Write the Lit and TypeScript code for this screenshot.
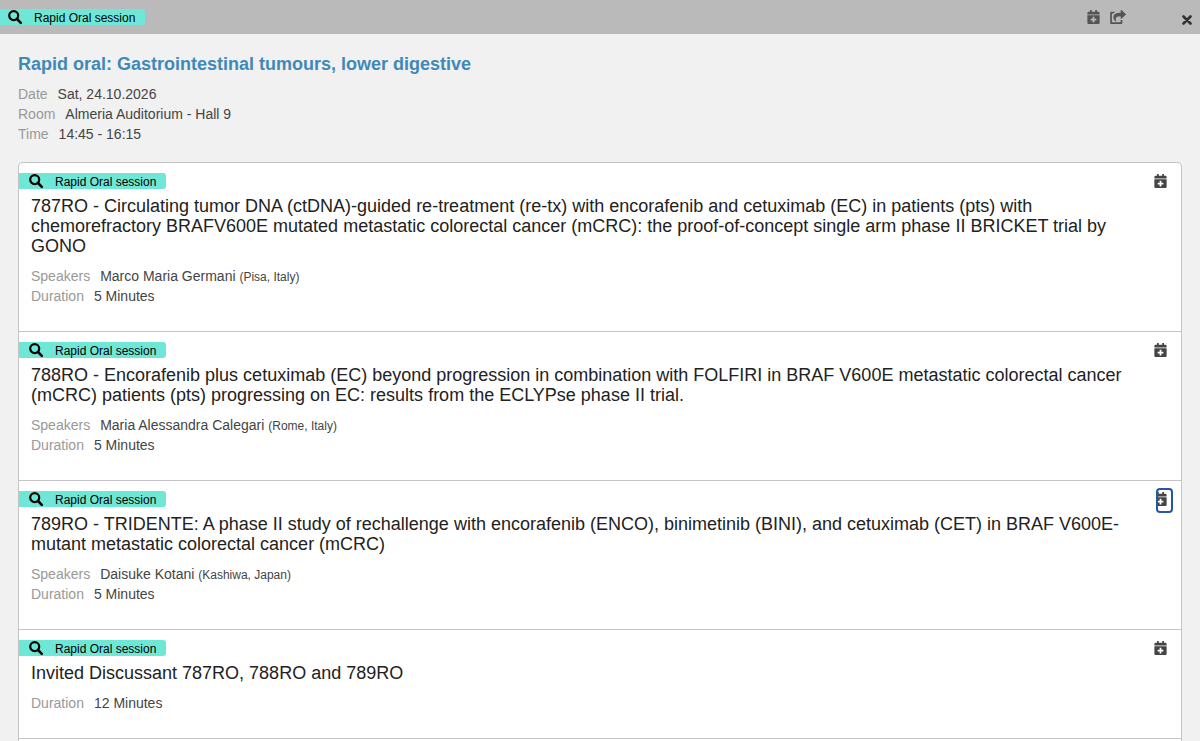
import { LitElement, html, css, svg, nothing } from "lit";
import { customElement, property } from "lit/decorators.js";

const calendarPlus = svg`<path d="M436 160H12c-6.6 0-12-5.4-12-12v-36c0-26.5 21.5-48 48-48h48V12c0-6.6 5.4-12 12-12h40c6.6 0 12 5.4 12 12v52h128V12c0-6.6 5.4-12 12-12h40c6.6 0 12 5.4 12 12v52h48c26.5 0 48 21.5 48 48v36c0 6.6-5.4 12-12 12zM12 192h424c6.6 0 12 5.4 12 12v260c0 26.5-21.5 48-48 48H48c-26.5 0-48-21.5-48-48V204c0-6.6 5.4-12 12-12zm316 140c0-6.6-5.4-12-12-12h-60v-60c0-6.6-5.4-12-12-12h-40c-6.6 0-12 5.4-12 12v60h-60c-6.6 0-12 5.4-12 12v40c0 6.6 5.4 12 12 12h60v60c0 6.6 5.4 12 12 12h40c6.6 0 12-5.4 12-12v-60h60c6.6 0 12-5.4 12-12v-40z"/>`;

const shareSquare = svg`<path d="M568.482 177.448L424.479 313.433C409.3 327.768 384 317.14 384 295.985v-71.963c-144.575.97-205.566 35.113-164.775 171.353 4.483 14.973-12.846 26.567-25.006 17.33C155.252 383.105 120 326.488 120 269.339c0-143.937 117.599-172.5 264-173.312V24.012c0-21.174 25.317-31.768 40.479-17.448l144.003 135.988c10.02 9.463 10.028 25.425 0 34.896zM384 379.128V448H64V128h50.916a11.99 11.99 0 0 0 8.648-3.693c14.953-15.568 32.237-27.89 51.014-37.676C185.708 80.83 181.584 64 169.033 64H48C21.49 64 0 85.49 0 112v352c0 26.51 21.49 48 48 48h352c26.51 0 48-21.49 48-48v-88.806c0-8.288-8.197-14.066-16.011-11.302a71.83 71.83 0 0 1-34.189 3.377c-7.27-1.046-13.8 4.514-13.8 11.859z"/>`;

interface Talk {
  title: string;
  speaker?: string;
  place?: string;
  duration: string;
  focused?: boolean;
}

const talks: Talk[] = [
  {
    title:
      "787RO - Circulating tumor DNA (ctDNA)-guided re-treatment (re-tx) with encorafenib and cetuximab (EC) in patients (pts) with chemorefractory BRAFV600E mutated metastatic colorectal cancer (mCRC): the proof-of-concept single arm phase II BRICKET trial by GONO",
    speaker: "Marco Maria Germani",
    place: "(Pisa, Italy)",
    duration: "5 Minutes",
  },
  {
    title:
      "788RO - Encorafenib plus cetuximab (EC) beyond progression in combination with FOLFIRI in BRAF V600E metastatic colorectal cancer (mCRC) patients (pts) progressing on EC: results from the ECLYPse phase II trial.",
    speaker: "Maria Alessandra Calegari",
    place: "(Rome, Italy)",
    duration: "5 Minutes",
  },
  {
    title:
      "789RO - TRIDENTE: A phase II study of rechallenge with encorafenib (ENCO), binimetinib (BINI), and cetuximab (CET) in BRAF V600E-mutant metastatic colorectal cancer (mCRC)",
    speaker: "Daisuke Kotani",
    place: "(Kashiwa, Japan)",
    duration: "5 Minutes",
    focused: true,
  },
  { title: "Invited Discussant 787RO, 788RO and 789RO", duration: "12 Minutes" },
];

@customElement("session-tag")
class SessionTag extends LitElement {
  static styles = css`
    :host {
      display: flex;
      align-items: center;
      gap: 12px;
      height: 16px;
      padding: 0 10px;
      border-radius: 0 3px 3px 0;
      background: #6fe7d6;
      color: #000;
      font-size: 12px;
      line-height: 16px;
      white-space: nowrap;
    }
    .icon {
      width: 14px;
      height: 14px;
      overflow: visible;
    }
    .label {
      padding-top: 2px;
    }
  `;
  render() {
    return html`<svg class="icon" viewBox="0 0 14 14" aria-hidden="true">
        <circle cx="5.7" cy="5.6" r="4.5" fill="none" stroke="#000" stroke-width="2.2" />
        <path d="M9 9L12.8 12.8" stroke="#000" stroke-width="2.6" stroke-linecap="round" />
      </svg>
      <span class="label">Rapid Oral session</span>`;
  }
}

@customElement("talk-item")
class TalkItem extends LitElement {
  @property({ attribute: false }) talk!: Talk;

  static styles = css`
    :host {
      display: block;
      padding: 10px 0 25px;
      border-top: 1px solid #c4c4c4;
    }
    .top {
      display: flex;
      justify-content: space-between;
      align-items: flex-start;
      height: 16px;
      padding-right: 10px;
    }
    .add {
      display: flex;
      align-items: flex-start;
      box-sizing: border-box;
      width: 17px;
      height: 24px;
      margin-top: -3px;
      padding: 4px 4px 4px 0;
      border: 0;
      background: none;
      color: #444;
      cursor: pointer;
    }
    .add.focused {
      justify-content: flex-end;
      height: 25px;
      margin-right: -2px;
      padding: 2px 4px 2px 0;
      border: 2px solid #2456a8;
      border-radius: 4px;
      overflow: hidden;
    }
    .icon {
      flex: none;
      width: 13px;
      height: 14px;
      fill: currentColor;
    }
    .title {
      margin: 7px 44px 10px 12px;
      color: #222;
      font-size: 18px;
      font-weight: 400;
      line-height: 20px;
    }
    .facts {
      margin: 0 12px;
      color: #444;
      font-size: 14px;
      line-height: 20px;
    }
    .fact {
      display: flex;
      gap: 10px;
    }
    dt {
      color: #999;
    }
    dd {
      margin: 0;
    }
    small {
      font-size: 12px;
      line-height: 16px;
    }
  `;
  render() {
    const t = this.talk;
    return html`
      <div class="top">
        <session-tag></session-tag>
        <button class="add ${t.focused ? "focused" : ""}" aria-label="Add to calendar">
          <svg class="icon" viewBox="0 0 448 512">${calendarPlus}</svg>
        </button>
      </div>
      <h2 class="title">${t.title}</h2>
      <dl class="facts">
        ${t.speaker
          ? html`<div class="fact"><dt>Speakers</dt><dd>${t.speaker} <small>${t.place}</small></dd></div>`
          : nothing}
        <div class="fact"><dt>Duration</dt><dd>${t.duration}</dd></div>
      </dl>
    `;
  }
}

@customElement("app-root")
class AppRoot extends LitElement {
  static styles = css`
    :host {
      display: block;
      height: 100vh;
      overflow: hidden;
      background: #f1f1f1;
      color: #444;
      font-family: "Helvetica Neue", "Liberation Sans", Arial, sans-serif;
      font-size: 14px;
      line-height: 20px;
    }
    .bar {
      display: flex;
      align-items: center;
      height: 34px;
      background: #bababa;
    }
    .bar session-tag {
      padding-left: 8px;
    }
    .tools {
      display: flex;
      gap: 10px;
      margin-left: auto;
      margin-right: 56px;
    }
    .tool {
      display: flex;
      padding: 0;
      border: 0;
      background: none;
      color: #555;
      cursor: pointer;
    }
    .close {
      margin: 6px 8px 0 0;
      color: #333;
    }
    .icon {
      height: 14px;
      fill: currentColor;
    }
    .calendar {
      width: 13px;
    }
    .share {
      width: 16px;
    }
    .cross {
      width: 10px;
      height: 10px;
    }
    .page {
      padding: 20px 18px 0;
    }
    .heading {
      margin: 0;
      color: #3f89b8;
      font-size: 18px;
      font-weight: 700;
      line-height: 20px;
    }
    .facts {
      margin: 10px 0 18px;
    }
    .fact {
      display: flex;
      gap: 10px;
    }
    dt {
      color: #999;
    }
    dd {
      margin: 0;
    }
    .list {
      border: 1px solid #c4c4c4;
      border-top: 0;
      border-radius: 5px 5px 0 0;
      background: #fff;
    }
    .list talk-item:first-child {
      border-radius: 4px 4px 0 0;
    }
    .end {
      height: 20px;
      border-top: 1px solid #c4c4c4;
    }
  `;
  render() {
    return html`
      <header class="bar">
        <session-tag></session-tag>
        <div class="tools">
          <button class="tool" aria-label="Add to calendar">
            <svg class="icon calendar" viewBox="0 0 448 512">${calendarPlus}</svg>
          </button>
          <button class="tool" aria-label="Share">
            <svg class="icon share" viewBox="0 0 576 512">${shareSquare}</svg>
          </button>
        </div>
        <button class="tool close" aria-label="Close">
          <svg class="icon cross" viewBox="0 0 10 10">
            <path d="M1.5 1.5L8.5 8.5M8.5 1.5L1.5 8.5" stroke="currentColor" stroke-width="2.6" stroke-linecap="round" />
          </svg>
        </button>
      </header>
      <main class="page">
        <h1 class="heading">Rapid oral: Gastrointestinal tumours, lower digestive</h1>
        <dl class="facts">
          <div class="fact"><dt>Date</dt><dd>Sat, 24.10.2026</dd></div>
          <div class="fact"><dt>Room</dt><dd>Almeria Auditorium - Hall 9</dd></div>
          <div class="fact"><dt>Time</dt><dd>14:45 - 16:15</dd></div>
        </dl>
        <section class="list">
          ${talks.map((t) => html`<talk-item .talk=${t}></talk-item>`)}
          <div class="end"></div>
        </section>
      </main>
    `;
  }
}
